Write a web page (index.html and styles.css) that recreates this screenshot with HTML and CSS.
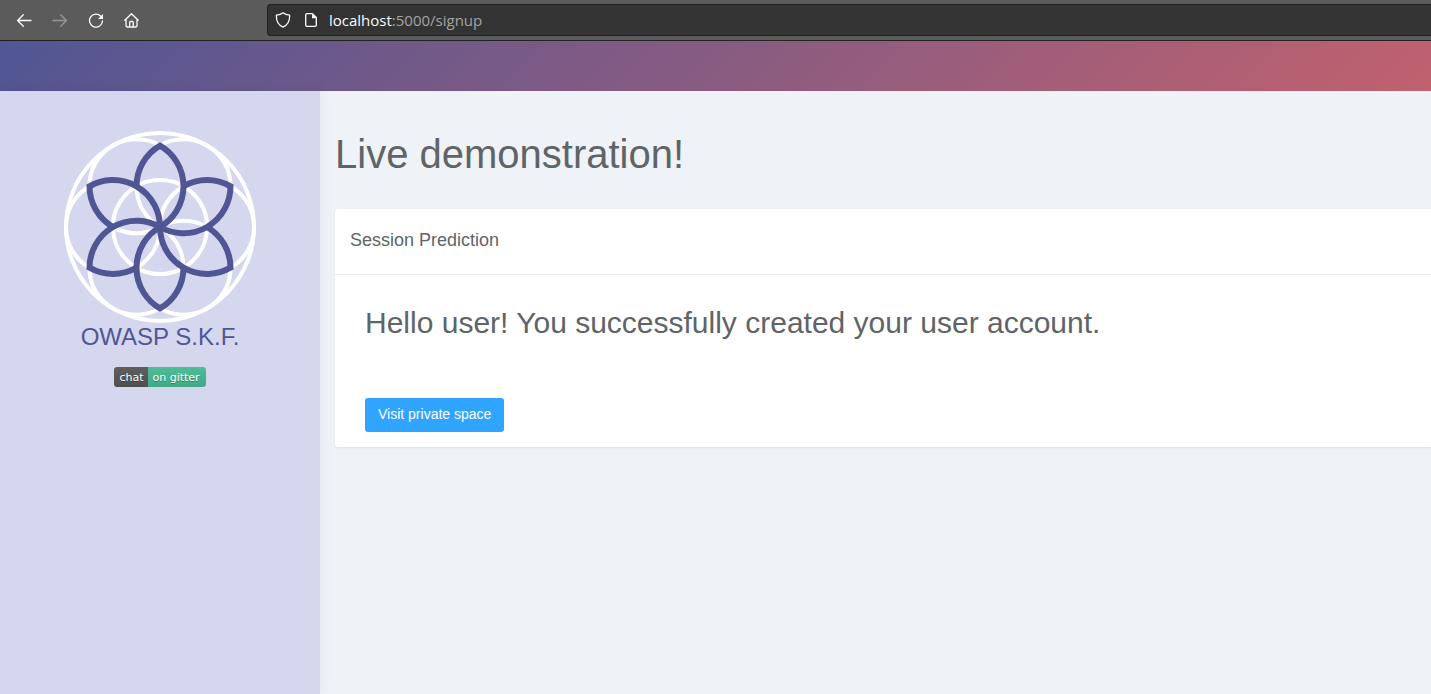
FILE: index.html
```html
<!DOCTYPE html>
<html lang="en">
<head>
<meta charset="utf-8">
<meta name="viewport" content="width=device-width, initial-scale=1">
<title>Live demonstration</title>
<link rel="stylesheet" href="styles.css">
</head>
<body>
<div class="toolbar">
  <div class="nav-buttons">
    <button class="nav-button" type="button" aria-label="Back">
      <svg viewBox="0 0 16 16"><path d="M15 8.500H1.800M7.300 2.800L1.600 8.500l5.700 5.700"/></svg>
    </button>
    <button class="nav-button nav-button-off" type="button" aria-label="Forward" disabled>
      <svg viewBox="0 0 16 16"><path d="M1 8.500h13.200M8.700 2.800l5.700 5.700-5.700 5.700"/></svg>
    </button>
    <button class="nav-button" type="button" aria-label="Reload">
      <svg viewBox="0 0 16 16"><path d="M12.800 4.200A6.500 6.500 0 1 0 14.500 9"/><path class="solid" d="M15 2v5H10z"/></svg>
    </button>
    <button class="nav-button" type="button" aria-label="Home">
      <svg viewBox="0 0 16 16"><path d="M.8 8.300L7.500 1.800l6.700 6.500M2 7.500v6.300a1.200 1.200 0 0 0 1.200 1.200h8.600a1.200 1.200 0 0 0 1.200-1.200V7.500M5.700 15v-4.500a1 1 0 0 1 1-1h1.600a1 1 0 0 1 1 1V15"/></svg>
    </button>
  </div>
  <div class="address">
    <svg class="address-icon" viewBox="0 0 16 16" aria-hidden="true"><path d="M8 .8C6.300 2.200 3.800 3 1.400 3.200c-.3 5.300 1.400 9.600 6.600 12 5.200-2.400 6.900-6.700 6.600-12C12.200 3 9.700 2.200 8 .8z"/></svg>
    <svg class="address-icon" viewBox="0 0 16 16" aria-hidden="true"><path d="M9.500 1.700H4a1.300 1.300 0 0 0-1.300 1.300v10A1.300 1.300 0 0 0 4 14.300h8a1.300 1.300 0 0 0 1.300-1.300V5.500z"/><path class="solid" d="M9 1.500v4.800h4.800z"/></svg>
    <div class="url"><span class="url-host">localhost</span>:5000/signup</div>
  </div>
</div>
<header class="banner"></header>
<div class="page">
  <aside class="sidebar">
    <svg class="logo" viewBox="-96 -96 192 192" role="img" aria-label="OWASP S.K.F. logo">
      <defs><path id="petal" d="M-23.500 -40.700A47 47 0 0 1 0 -81.400A47 47 0 0 1 0 0"/></defs>
      <g class="rings">
        <circle r="94"/><circle r="47"/>
        <circle cx="47" r="47"/><circle cx="-47" r="47"/>
        <circle cx="23.500" cy="-40.700" r="47"/><circle cx="-23.500" cy="-40.700" r="47"/>
        <circle cx="23.500" cy="40.700" r="47"/><circle cx="-23.500" cy="40.700" r="47"/>
      </g>
      <g class="petals">
        <use href="#petal"/><use href="#petal" transform="rotate(60)"/>
        <use href="#petal" transform="rotate(120)"/><use href="#petal" transform="rotate(180)"/>
        <use href="#petal" transform="rotate(240)"/><use href="#petal" transform="rotate(300)"/>
      </g>
    </svg>
    <div class="brand">OWASP S.K.F.</div>
    <a class="badge" href="#"><span class="badge-left">chat</span><span class="badge-right">on gitter</span></a>
  </aside>
  <main class="content">
    <h1 class="title">Live demonstration!</h1>
    <section class="card">
      <h2 class="card-header">Session Prediction</h2>
      <div class="card-body">
        <p class="message">Hello user! You successfully created your user account.</p>
        <button class="primary" type="button">Visit private space</button>
      </div>
    </section>
  </main>
</div>
</body>
</html>
```
FILE: styles.css
```css
* { box-sizing: border-box; }
body {
  margin: 0;
  min-height: 100vh;
  display: flex;
  flex-direction: column;
  background: #eff3f7;
  color: #5e6468;
  font-family: "Liberation Sans", Arial, sans-serif;
  overflow-x: hidden;
}
.toolbar {
  display: flex;
  align-items: center;
  height: 41px;
  background: #5b5b5b;
  border-bottom: 1px solid #232323;
}
.nav-buttons {
  display: flex;
  gap: 20px;
  width: 267px;
  padding-left: 16px;
}
.nav-button {
  width: 16px;
  height: 16px;
  padding: 0;
  border: 0;
  background: none;
  color: #fbfbfe;
}
.nav-button-off { color: #979797; }
.nav-button svg, .address-icon {
  display: block;
  width: 16px;
  height: 16px;
  fill: none;
  stroke: currentColor;
  stroke-width: 1.3;
  stroke-linecap: round;
  stroke-linejoin: round;
}
.nav-button .solid, .address-icon .solid { fill: currentColor; stroke: none; }
.address {
  flex: 1;
  display: flex;
  align-items: center;
  gap: 12px;
  height: 32px;
  padding-left: 7px;
  border: 1px solid #202020;
  border-right: 0;
  border-radius: 4px 0 0 4px;
  background: #333333;
  color: #fbfbfe;
}
.url {
  margin-left: -2px;
  font-family: "Open Sans", "Noto Sans", sans-serif;
  font-size: 15px;
  line-height: 20px;
  color: #a3a3a3;
}
.url-host { color: #fbfbfe; }
.banner {
  height: 50px;
  background: linear-gradient(135deg, #505694 0%, #c1616e 100%);
}
.page { flex: 1; display: flex; }
.sidebar {
  width: 320px;
  display: flex;
  flex-direction: column;
  align-items: center;
  padding-top: 40px;
  background: #d5d7ee;
  box-shadow: 0 0 14px rgba(0, 0, 0, 0.06);
}
.logo { width: 192px; height: 192px; }
.rings { fill: none; stroke: #ffffff; stroke-width: 4; }
.petals { fill: none; stroke: #505694; stroke-width: 6; stroke-miterlimit: 10; }
.brand {
  font-size: 24px;
  line-height: 28px;
  color: #505694;
}
.badge {
  display: flex;
  margin-top: 16px;
  border-radius: 3px;
  overflow: hidden;
  font-family: "DejaVu Sans", Verdana, sans-serif;
  font-size: 11px;
  line-height: 19px;
  color: #ffffff;
  text-decoration: none;
  text-shadow: 0 1px 0 rgba(1, 1, 1, 0.3);
}
.badge-left { padding: 1px 5px 0; background: linear-gradient(#5f5f5f, #4e4e4e); }
.badge-right { padding: 1px 6px 0 4px; background: linear-gradient(#4dbd98, #41a987); }
.content {
  flex: 1;
  min-width: 0;
  padding: 39px 0 0 15px;
}
.title {
  margin: 0;
  font-size: 40px;
  font-weight: 400;
  line-height: 48px;
}
.card {
  margin-top: 31px;
  background: #ffffff;
  border-radius: 3px 0 0 3px;
  box-shadow: 0 1px 2px rgba(0, 0, 0, 0.08);
}
.card-header {
  margin: 0;
  padding: 20px 15px 23px;
  border-bottom: 1px solid #e9ebec;
  font-size: 18px;
  font-weight: 400;
  line-height: 22px;
}
.card-body { padding: 30px 30px 15px; }
.message {
  margin: 0 0 57px;
  font-size: 30px;
  line-height: 36px;
}
.primary {
  display: block;
  height: 34px;
  padding: 0 13px 2px;
  border: 0;
  border-radius: 3px;
  background: #30a5ff;
  color: #ffffff;
  font-family: inherit;
  font-size: 14px;
  line-height: 20px;
}
```
